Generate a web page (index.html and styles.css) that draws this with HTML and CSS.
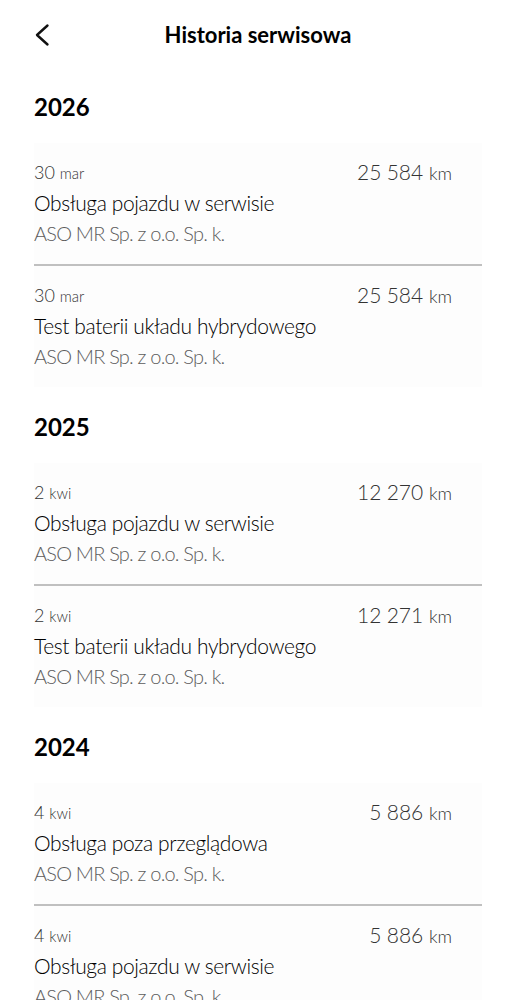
FILE: index.html
```html
<!DOCTYPE html>
<html lang="pl">
<head>
    <meta charset="UTF-8">
    <meta name="viewport" content="width=device-width, initial-scale=1.0">
    <title>Historia serwisowa</title>
    <link rel="stylesheet" href="styles.css">
</head>
<body>
<header class="topbar">
    <a class="back" href="#" aria-label="Wstecz">
        <svg viewBox="0 0 24 24" width="24" height="24">
            <path d="M17.5 2.5 L7 12 L17.5 21.5" fill="none" stroke="#111" stroke-width="2.4" stroke-linecap="round" stroke-linejoin="round"/>
        </svg>
    </a>
    <h1>Historia serwisowa</h1>
    <span></span>
</header>

<main class="history">
    <section class="year">
        <h2>2026</h2>
        <ul class="card">
            <li class="entry">
                <div class="entry-top">
                    <span class="date">30 <small>mar</small></span>
                    <span class="mileage">25&#8239;584 <small>km</small></span>
                </div>
                <p class="entry-title">Obsługa pojazdu w serwisie</p>
                <p class="entry-dealer">ASO MR Sp. z o.o. Sp. k.</p>
            </li>
            <li class="entry">
                <div class="entry-top">
                    <span class="date">30 <small>mar</small></span>
                    <span class="mileage">25&#8239;584 <small>km</small></span>
                </div>
                <p class="entry-title">Test baterii układu hybrydowego</p>
                <p class="entry-dealer">ASO MR Sp. z o.o. Sp. k.</p>
            </li>
        </ul>
    </section>

    <section class="year">
        <h2>2025</h2>
        <ul class="card">
            <li class="entry">
                <div class="entry-top">
                    <span class="date">2 <small>kwi</small></span>
                    <span class="mileage">12&#8239;270 <small>km</small></span>
                </div>
                <p class="entry-title">Obsługa pojazdu w serwisie</p>
                <p class="entry-dealer">ASO MR Sp. z o.o. Sp. k.</p>
            </li>
            <li class="entry">
                <div class="entry-top">
                    <span class="date">2 <small>kwi</small></span>
                    <span class="mileage">12&#8239;271 <small>km</small></span>
                </div>
                <p class="entry-title">Test baterii układu hybrydowego</p>
                <p class="entry-dealer">ASO MR Sp. z o.o. Sp. k.</p>
            </li>
        </ul>
    </section>

    <section class="year">
        <h2>2024</h2>
        <ul class="card">
            <li class="entry">
                <div class="entry-top">
                    <span class="date">4 <small>kwi</small></span>
                    <span class="mileage">5&#8239;886 <small>km</small></span>
                </div>
                <p class="entry-title">Obsługa poza przeglądowa</p>
                <p class="entry-dealer">ASO MR Sp. z o.o. Sp. k.</p>
            </li>
            <li class="entry">
                <div class="entry-top">
                    <span class="date">4 <small>kwi</small></span>
                    <span class="mileage">5&#8239;886 <small>km</small></span>
                </div>
                <p class="entry-title">Obsługa pojazdu w serwisie</p>
                <p class="entry-dealer">ASO MR Sp. z o.o. Sp. k.</p>
            </li>
        </ul>
    </section>
</main>
</body>
</html>
```

FILE: styles.css
```css
body {
    font-family: Lato, "Noto Sans", sans-serif;
    margin: 0;
    padding: 0;
    background: #fff;
    color: #111;
}

.topbar {
    display: grid;
    grid-template-columns: 1fr auto 1fr;
    align-items: center;
    height: 70px;
    padding: 0 30px;
}

.topbar .back {
    display: flex;
    width: 24px;
    height: 24px;
}

.topbar h1 {
    margin: 0;
    font-size: 22px;
    font-weight: 700;
    line-height: 28px;
    color: #000;
}

.history {
    padding: 23px 34px 0;
}

.year h2 {
    margin: 0 0 22px;
    font-size: 24px;
    font-weight: 700;
    line-height: 28px;
    color: #000;
}

.year + .year {
    margin-top: 26px;
}

.card {
    list-style: none;
    margin: 0;
    padding: 0;
    background: #fdfdfd;
}

.entry {
    padding: 17px 30px 17px 0;
}

.entry + .entry {
    border-top: 2px solid #c0c0c0;
}

.entry-top {
    display: flex;
    justify-content: space-between;
    align-items: flex-start;
    line-height: 24px;
}

.entry-top small {
    line-height: 1;
}

.date {
    font-size: 18px;
    font-weight: 300;
    color: #333;
}

.date small {
    font-size: 15px;
}

.mileage {
    font-size: 21px;
    font-weight: 300;
    color: #333;
}

.mileage small {
    font-size: 18px;
}

.entry-title {
    margin: 5px 0 0;
    font-size: 21px;
    font-weight: 300;
    line-height: 28px;
    letter-spacing: -0.4px;
    color: #000;
}

.entry-dealer {
    margin: 2px 0 0;
    font-size: 20px;
    font-weight: 300;
    line-height: 28px;
    letter-spacing: -0.8px;
    color: #5c5c5c;
}
```
